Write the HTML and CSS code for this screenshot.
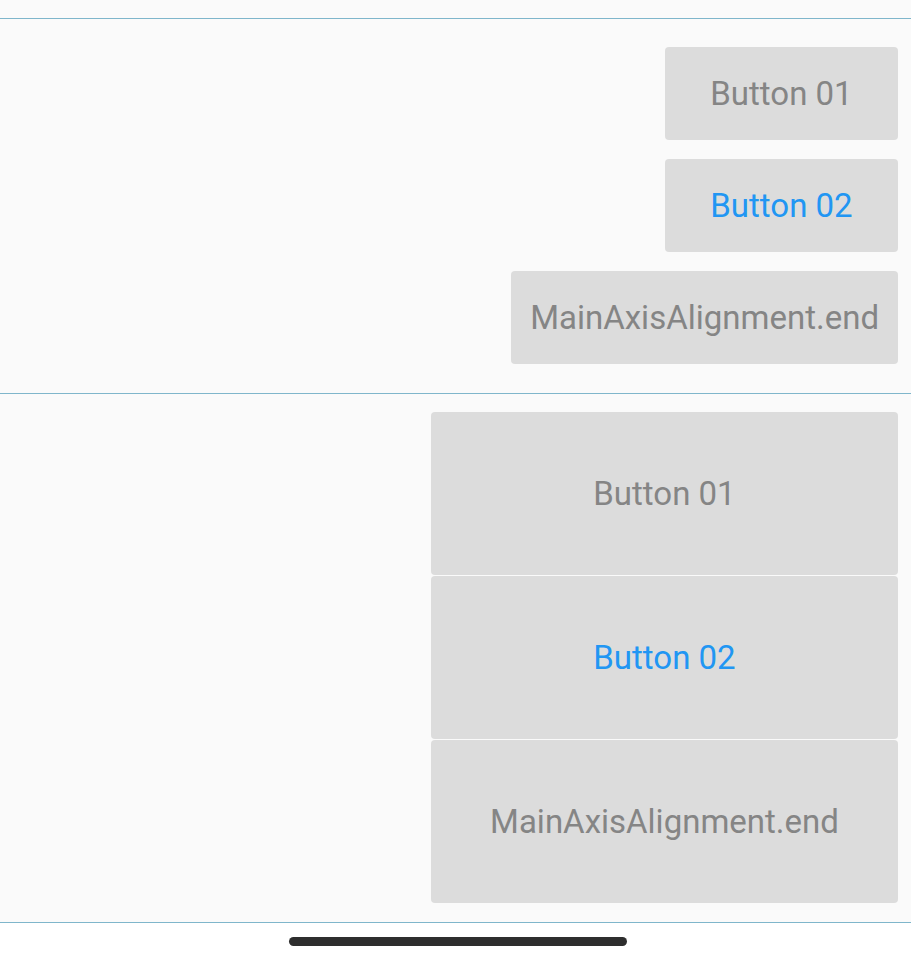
FILE: index.html
```html
<!DOCTYPE html>
<html lang="en">
<head>
    <meta charset="UTF-8">
    <meta name="viewport" content="width=device-width, initial-scale=1.0">
    <title>MainAxisAlignment.end</title>
    <link rel="stylesheet" href="styles.css">
</head>
<body>
    <div class="top-strip"></div>

    <div class="demo-row">
        <button class="btn fixed">Button 01</button>
        <button class="btn fixed active">Button 02</button>
        <button class="btn">MainAxisAlignment.end</button>
    </div>

    <div class="demo-row stretched">
        <button class="btn tall">Button 01</button>
        <button class="btn tall active">Button 02</button>
        <button class="btn tall">MainAxisAlignment.end</button>
    </div>

    <div class="home-area">
        <div class="home-bar"></div>
    </div>
</body>
</html>
```

FILE: styles.css
```css
body {
    margin: 0;
    background-color: #fafafa;
    font-family: Roboto, "Liberation Sans", sans-serif;
}

.top-strip {
    height: 18px;
    border-bottom: 1px solid #7fb6cb;
}

.demo-row {
    display: flex;
    flex-direction: column;
    align-items: flex-end;
    gap: 19px;
    padding: 28px 13px 29px;
    border-bottom: 1px solid #7fb6cb;
}

.demo-row.stretched {
    gap: 1px;
    padding: 18px 13px 19px;
}

.btn {
    height: 93px;
    padding: 0 19px;
    background-color: #dcdcdc;
    color: #858585;
    border: none;
    border-radius: 4px;
    font-family: Roboto, "Liberation Sans", sans-serif;
    font-size: 33px;
    font-weight: 400;
    cursor: pointer;
}

.btn.fixed {
    width: 233px;
}

.btn.active {
    color: #2196f3;
}

.btn.tall {
    width: 467px;
    height: 163px;
}

.home-area {
    background-color: #fff;
    height: 37px;
    padding-top: 14px;
    box-sizing: border-box;
}

.home-bar {
    width: 338px;
    height: 9px;
    margin-left: 289px;
    border-radius: 5px;
    background-color: #2e2e2e;
}
```
